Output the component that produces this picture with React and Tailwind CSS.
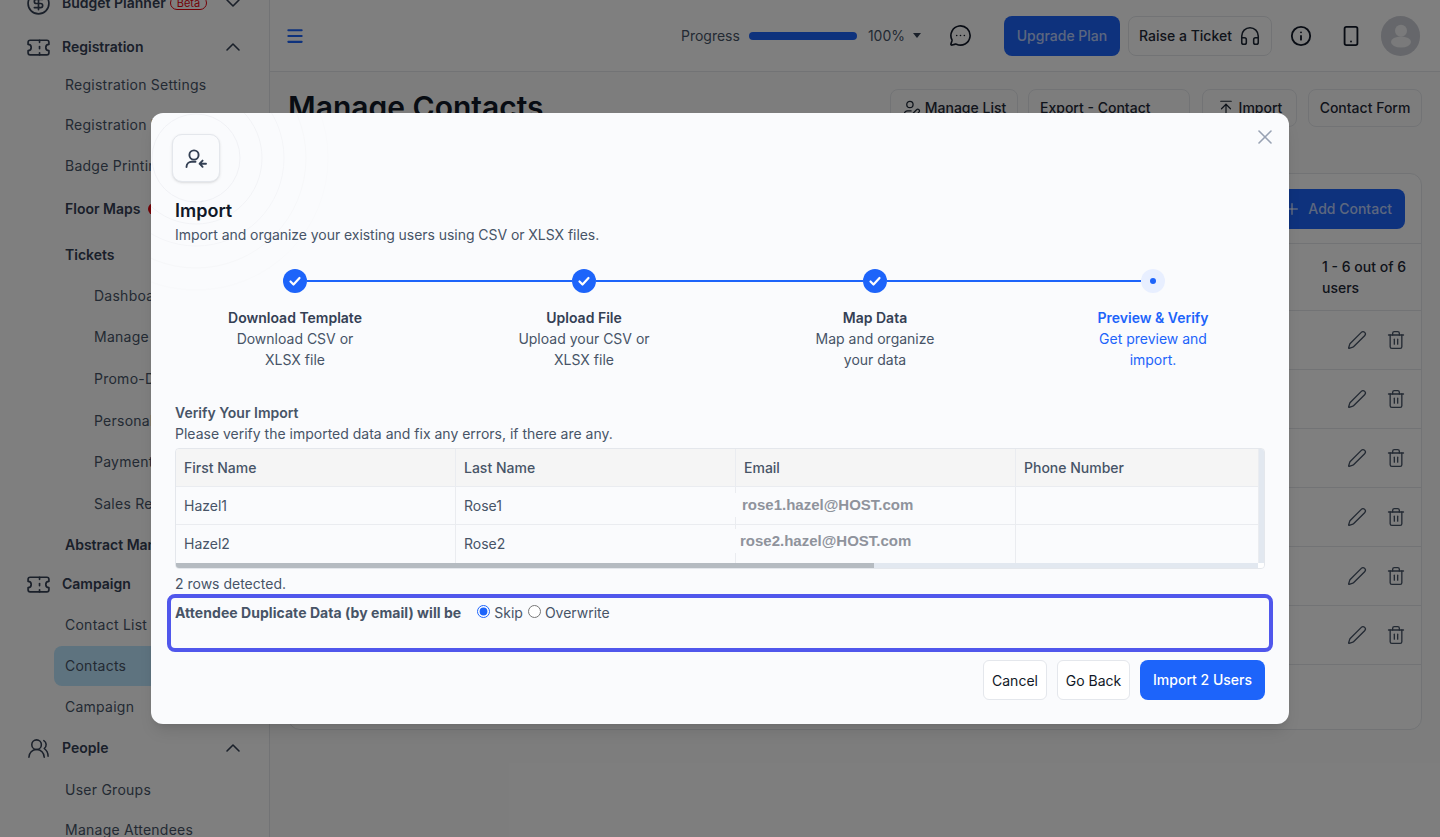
import React from "react";
import {
  ArrowUpToLine,
  ChevronDown,
  ChevronUp,
  CircleDollarSign,
  Headphones,
  Info,
  Menu,
  MessageCircleMore,
  Pen,
  Plus,
  Smartphone,
  Ticket,
  Trash2,
  UserPen,
  UsersRound,
  X,
} from "lucide-react";

const navItems = [
  { label: "Budget Planner", kind: "head", icon: CircleDollarSign, mt: "-mt-[15px]", badge: true, down: true },
  { label: "Registration", kind: "head", icon: Ticket, mt: "mt-[8px]" },
  { label: "Registration Settings", kind: "sub", mt: "mt-[2px]" },
  { label: "Registration Form", kind: "sub", mt: "mt-[4px]" },
  { label: "Badge Printing", kind: "sub", mt: "mt-[5px]" },
  { label: "Floor Maps", kind: "group", mt: "mt-[7px]", dot: true },
  { label: "Tickets", kind: "group", mt: "mt-[10px]" },
  { label: "Dashboard", kind: "deep", mt: "mt-[5px]" },
  { label: "Manage Tickets", kind: "deep", mt: "mt-[5px]" },
  { label: "Promo-Discount", kind: "deep", mt: "mt-[6px]" },
  { label: "Personalization", kind: "deep", mt: "mt-[6px]" },
  { label: "Payment Settings", kind: "deep", mt: "mt-[5px]" },
  { label: "Sales Report", kind: "deep", mt: "mt-[6px]" },
  { label: "Abstract Management", kind: "group", mt: "mt-[5px]" },
  { label: "Campaign", kind: "head", icon: Ticket, mt: "mt-[3px]" },
  { label: "Contact List", kind: "sub", mt: "mt-[5px]" },
  { label: "Contacts", kind: "active", mt: "mt-[3px]" },
  { label: "Campaign", kind: "sub", mt: "mt-[3px]" },
  { label: "People", kind: "head", icon: UsersRound, mt: "mt-[5px]" },
  { label: "User Groups", kind: "sub", mt: "mt-[6px]" },
  { label: "Manage Attendees", kind: "sub", mt: "mt-[4px]" },
];

const steps = [
  { title: "Download Template", lines: ["Download CSV or", "XLSX file"], ml: "" },
  { title: "Upload File", lines: ["Upload your CSV or", "XLSX file"], ml: "ml-[129px]" },
  { title: "Map Data", lines: ["Map and organize", "your data"], ml: "ml-[131px]" },
  { title: "Preview & Verify", lines: ["Get preview and", "import."], ml: "ml-[118px]", current: true },
];

function NavRow({ item }) {
  const Icon = item.icon;
  if (item.kind === "head") {
    return (
      <div className={`flex h-9 shrink-0 items-center pl-[26px] pr-[24px] text-sm font-semibold text-[#344054] ${item.mt}`}>
        <span className="mr-[11px] flex w-[25px] shrink-0 justify-center">
          <Icon size={item.label === "People" ? 23 : 25} strokeWidth={1.6} />
        </span>
        <span>{item.label}</span>
        {item.badge && (
          <span className="ml-[4px] rounded-full border border-red-600 px-[6px] text-[11px] leading-[12px] font-normal text-red-600">Beta</span>
        )}
        {item.label !== "Campaign" && (
          <span className="ml-auto">
            {item.down ? <ChevronDown size={24} strokeWidth={1.6} /> : <ChevronUp size={24} strokeWidth={1.6} />}
          </span>
        )}
      </div>
    );
  }
  if (item.kind === "active") {
    return (
      <div className={`ml-[54px] mr-[16px] flex h-10 shrink-0 items-center rounded-lg bg-[#bce6ff] pl-[11px] text-sm tracking-[0.25px] text-[#475467] ${item.mt}`}>
        {item.label}
      </div>
    );
  }
  const styles = {
    sub: "pl-[65px] tracking-[0.25px] text-[#475467]",
    deep: "pl-[94px] tracking-[0.25px] text-[#475467]",
    group: "pl-[65px] font-semibold text-[#344054]",
  };
  return (
    <div className={`flex h-9 shrink-0 items-center whitespace-nowrap text-sm ${styles[item.kind]} ${item.mt}`}>
      <span>{item.label}</span>
      {item.dot && <span className="ml-[8px] h-3 w-3 rounded-full bg-red-600" />}
    </div>
  );
}

function Sidebar() {
  return (
    <aside className="flex h-full w-[270px] shrink-0 flex-col overflow-hidden border-r border-[#e5e7eb] bg-white">
      {navItems.map((item) => (
        <NavRow key={item.label + item.kind} item={item} />
      ))}
    </aside>
  );
}

function TopBar() {
  return (
    <div className="flex h-[72px] shrink-0 items-center border-b border-[#e5e7eb] bg-white pl-[15px] pr-[20px]">
      <Menu size={20} strokeWidth={2.5} className="text-[#1d64fa]" />
      <div className="ml-auto flex items-center">
        <span className="text-sm text-[#475467]">Progress</span>
        <span className="ml-[9px] h-2 w-[108px] rounded-full bg-[#1d64fa]" />
        <span className="ml-[11px] text-sm text-[#475467]">100%</span>
        <span className="ml-[8px] h-0 w-0 border-x-[4px] border-t-[5px] border-x-transparent border-t-[#344054]" />
        <MessageCircleMore size={23} strokeWidth={1.7} className="ml-[28px] text-[#111827]" />
        <button className="ml-[32px] h-10 w-[116px] rounded-lg bg-[#1d64fa] text-sm font-medium text-white/70">Upgrade Plan</button>
        <div className="ml-[8px] flex h-10 w-[144px] items-center justify-center gap-[7px] rounded-lg border border-[#e5e7eb] text-sm font-medium text-[#1f2937]">
          Raise a Ticket
          <Headphones size={22} strokeWidth={1.7} />
        </div>
        <Info size={22} strokeWidth={2} className="ml-[18px] text-[#111827]" />
        <Smartphone size={22} strokeWidth={2} className="ml-[28px] text-[#111827]" />
        <div className="ml-[19px] flex h-10 w-[39px] items-center justify-center rounded-full bg-[#cdcfd6]">
          <svg width="22" height="26" viewBox="0 0 22 26" fill="#f4f5f7">
            <circle cx="11" cy="7.7" r="6" />
            <ellipse cx="11" cy="19" rx="10" ry="5.5" />
          </svg>
        </div>
      </div>
    </div>
  );
}

function OutlineButton({ className, children }) {
  return (
    <div className={`flex h-[38px] items-center gap-1 rounded-lg border border-[#e5e7eb] text-sm font-medium text-[#1f2937] ${className}`}>
      {children}
    </div>
  );
}

function ContactCard() {
  return (
    <div className="mx-[18px] mt-[46px] h-[557px] rounded-xl border border-[#e5e7eb] bg-white">
      <div className="flex h-[70px] items-center justify-end border-b border-[#e5e7eb] pr-[16px]">
        <button className="flex h-10 w-[135px] items-center justify-end gap-[7px] rounded-lg bg-[#1d64fa] pr-[13px] text-sm font-medium text-white/70">
          <Plus size={18} />
          Add Contact
        </button>
      </div>
      <div className="flex h-[67px] items-center justify-end border-b border-[#e5e7eb] pr-[4px] text-sm font-medium leading-[21px] text-[#1f2937]">
        <span className="w-[95px]">1 - 6 out of 6 users</span>
      </div>
      {[0, 1, 2, 3, 4, 5].map((i) => (
        <div key={i} className="flex h-[59px] items-center justify-end gap-[19px] border-b border-[#e5e7eb] pr-[15px] text-[#475467]">
          <Pen size={20} strokeWidth={1.6} />
          <Trash2 size={20} strokeWidth={1.6} />
        </div>
      ))}
    </div>
  );
}

function Main() {
  return (
    <main className="flex h-full min-w-0 flex-1 flex-col bg-[#fbfbfb]">
      <TopBar />
      <div className="flex items-start px-[18px] pt-[17px]">
        <h1 className="text-3xl leading-9 font-semibold text-[#111827]">Manage Contacts</h1>
        <div className="ml-auto flex">
          <OutlineButton className="w-[128px] justify-center">
            <UserPen size={19} strokeWidth={1.6} />
            Manage List
          </OutlineButton>
          <OutlineButton className="ml-[10px] w-[162px] pl-[11px]">Export - Contact</OutlineButton>
          <OutlineButton className="ml-[12px] w-[95px] justify-center">
            <ArrowUpToLine size={18} strokeWidth={1.6} />
            Import
          </OutlineButton>
          <OutlineButton className="ml-[11px] w-[114px] justify-center">Contact Form</OutlineButton>
        </div>
      </div>
      <ContactCard />
    </main>
  );
}

function ImportIcon() {
  return (
    <svg width="24" height="24" viewBox="0 0 24 24" fill="none" stroke="#344054" strokeWidth="1.9" strokeLinecap="round" strokeLinejoin="round">
      <circle cx="10" cy="9" r="4.6" />
      <path d="M2.5 21c0-3 2.4-5.2 5.2-5.2h3.8" />
      <path d="M22 17.7h-6.4M18.6 14.6l-3 3.1 3 3.1" />
    </svg>
  );
}

function Stepper() {
  return (
    <div className="mt-[24px]">
      <div className="flex items-center pl-[108px]">
        {["w-[265px]", "w-[267px]", "w-[254px]"].map((w) => (
          <React.Fragment key={w}>
            <span className="flex h-6 w-6 items-center justify-center rounded-full bg-[#1d64fa] text-white">
              <svg width="14" height="14" viewBox="0 0 14 14" fill="none" stroke="currentColor" strokeWidth="2.2" strokeLinecap="round" strokeLinejoin="round">
                <path d="M2.5 7.5l3 3 6-6.5" />
              </svg>
            </span>
            <span className={`h-0.5 bg-[#1d64fa] ${w}`} />
          </React.Fragment>
        ))}
        <span className="flex h-6 w-6 items-center justify-center rounded-full bg-[#e8efff]">
          <span className="h-1.5 w-1.5 rounded-full bg-[#1d64fa]" />
        </span>
      </div>
      <div className="mt-[14px] flex pl-[40px]">
        {steps.map((s) => (
          <div key={s.title} className={`w-40 shrink-0 text-center text-sm leading-[21px] ${s.ml} ${s.current ? "text-[#1d64fa]" : "text-[#475467]"}`}>
            <div className={`font-semibold ${s.current ? "" : "text-[#344054]"}`}>{s.title}</div>
            <div>{s.lines[0]}</div>
            <div>{s.lines[1]}</div>
          </div>
        ))}
      </div>
    </div>
  );
}

function EmailCell({ children, position }) {
  return (
    <div className="relative h-full w-[280px] shrink-0 border-r border-[#eaecf0]">
      <span className={`absolute z-10 h-6 whitespace-nowrap bg-[#fafbfd] pl-2 pr-1 font-['Liberation_Sans',sans-serif] text-[15px] leading-6 font-bold text-[#8f939c] ${position}`}>
        {children}
      </span>
    </div>
  );
}

function PreviewTable() {
  const headCell = "flex h-full w-[280px] shrink-0 items-center border-r border-[#eaecf0] pl-2 text-sm font-medium text-[#475467]";
  const cell = "flex h-full w-[280px] shrink-0 items-center border-r border-[#eaecf0] pl-2 text-sm text-[#475467]";
  return (
    <div className="mt-[4px] h-[121px] overflow-hidden rounded-sm border border-[#e4e7ec]">
      <div className="flex h-[114px]">
        <div className="min-w-0 flex-1">
          <div className="flex h-[38px] border-b border-[#eaecf0] bg-[#f5f5f5]">
            <div className={headCell}>First Name</div>
            <div className={headCell}>Last Name</div>
            <div className={headCell}>Email</div>
            <div className="flex flex-1 items-center pl-2 text-sm font-medium text-[#475467]">Phone Number</div>
          </div>
          <div className="flex h-[38px] border-b border-[#eaecf0]">
            <div className={cell}>Hazel1</div>
            <div className={cell}>Rose1</div>
            <EmailCell position="left-[-2px] top-[6px]">rose1.hazel@HOST.com</EmailCell>
          </div>
          <div className="flex h-[38px]">
            <div className={cell}>Hazel2</div>
            <div className={cell}>Rose2</div>
            <EmailCell position="left-[-4px] top-[4px]">rose2.hazel@HOST.com</EmailCell>
          </div>
        </div>
        <div className="w-[6px] shrink-0 border-l border-[#eaecf0] bg-[#e2e8f0]" />
      </div>
      <div className="flex h-[5px] bg-[#e2e8f0]">
        <span className="w-[698px] bg-[#b5bbc1]" />
        <span className="ml-auto w-[6px] bg-white" />
      </div>
    </div>
  );
}

function ImportModal() {
  return (
    <div className="relative flex h-[611px] w-[1138px] flex-col overflow-hidden rounded-xl bg-[#fafbfd] px-[24px] pt-[21px] shadow-lg">
      <svg className="absolute left-[-95px] top-[-95px]" width="280" height="280" viewBox="0 0 280 280" fill="none">
        <circle cx="140" cy="140" r="44" stroke="#f0f1f5" />
        <circle cx="140" cy="140" r="66" stroke="#f2f3f6" />
        <circle cx="140" cy="140" r="88" stroke="#f4f5f8" />
        <circle cx="140" cy="140" r="110" stroke="#f6f7f9" />
        <circle cx="140" cy="140" r="132" stroke="#f8f9fb" />
      </svg>
      <X size={24} strokeWidth={1.6} className="absolute right-[12px] top-[12px] text-[#98a2b3]" />

      <div className="relative -ml-[3px] flex h-12 w-12 items-center justify-center rounded-[10px] border border-[#e4e7ec] bg-[#fafbfd] shadow-sm">
        <ImportIcon />
      </div>
      <h2 className="relative mt-[18px] text-lg leading-[22px] font-semibold text-[#101828]">Import</h2>
      <p className="relative mt-[2px] text-sm leading-[21px] tracking-[-0.05px] text-[#475467]">Import and organize your existing users using CSV or XLSX files.</p>

      <Stepper />

      <div className="mt-[32px] text-sm leading-[21px] font-semibold text-[#475467]">Verify Your Import</div>
      <p className="text-sm leading-[21px] text-[#475467]">Please verify the imported data and fix any errors, if there are any.</p>
      <PreviewTable />
      <p className="mt-[4px] text-sm leading-[21px] text-[#475467]">2 rows detected.</p>

      <div className="-mx-[8px] h-[58px] rounded-lg border-4 border-[#5057ec] pl-[4px] pt-[4px] text-sm leading-[21px] text-[#475467]">
        <div className="flex items-center">
          <span className="font-bold tracking-[0.05px]">Attendee Duplicate Data (by email) will be</span>
          <input type="radio" name="dup" defaultChecked className="ml-[16px] h-[13px] w-[13px] -translate-y-[1px] accent-[#1d64fa]" />
          <span className="ml-[4px]">Skip</span>
          <input type="radio" name="dup" className="ml-[5px] h-[13px] w-[13px] -translate-y-[1px]" />
          <span className="ml-[4px]">Overwrite</span>
        </div>
      </div>

      <div className="mt-[8px] flex justify-end gap-[10px] text-sm">
        <button className="h-10 w-[64px] rounded-md border border-[#e4e7ec] bg-white pt-[2px] text-[#111827]">Cancel</button>
        <button className="h-10 w-[73px] rounded-md border border-[#e4e7ec] bg-white pt-[2px] text-[#111827]">Go Back</button>
        <button className="h-10 w-[125px] rounded-lg bg-[#1d64fa] font-medium text-white">Import 2 Users</button>
      </div>
    </div>
  );
}

export default function App() {
  return (
    <div className="relative flex h-[837px] w-full overflow-hidden bg-white font-['Inter',sans-serif]">
      <Sidebar />
      <Main />
      {/* dimmed backdrop + modal */}
      <div className="absolute inset-0 flex items-center justify-center bg-black/50">
        <ImportModal />
      </div>
    </div>
  );
}
